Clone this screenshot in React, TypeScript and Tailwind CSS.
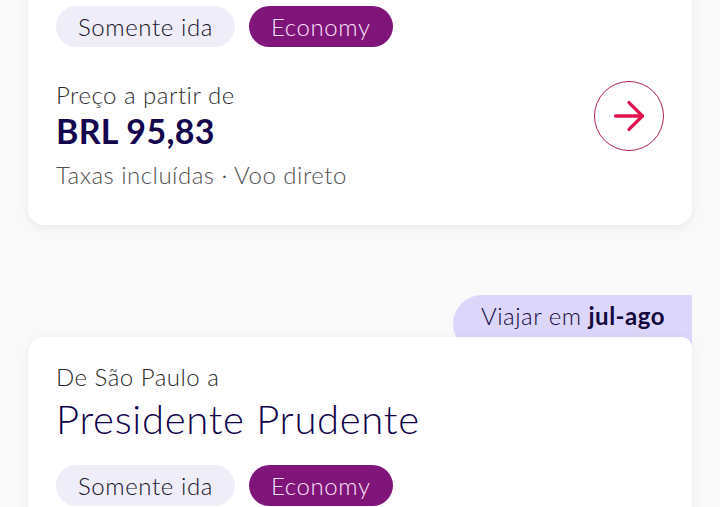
import { ArrowRight } from "lucide-react";

const font = { fontFamily: "Lato, 'Noto Sans', sans-serif" };

function Pills() {
  return (
    <div className="flex gap-[14px]">
      <span className="h-[41px] px-[22px] flex items-center rounded-full bg-[#efedf8] text-[#14122b] text-[24px] tracking-[0.6px]">
        Somente ida
      </span>
      <span className="h-[41px] px-[22px] flex items-center rounded-full bg-[#7f1479] text-[#fbe3f8] text-[24px] tracking-[0.6px]">
        Economy
      </span>
    </div>
  );
}

export default function App() {
  return (
    <div className="w-[720px] h-[507px] overflow-hidden bg-[#f9f9f9] font-light" style={font}>
      <div className="px-[28px] -mt-[20px]">
        {/* card 1 */}
        <div className="bg-white rounded-[16px] shadow-[0_2px_10px_rgba(0,0,0,0.07)] px-[28px] pt-[26px] pb-[34px]">
          <Pills />
          <div className="mt-[32px] flex items-start justify-between">
            <div>
              <div className="text-[24px] leading-[32px] text-[#2f2f2f] tracking-[0.5px]">Preço a partir de</div>
              <div className="text-[34px] leading-[40px] font-bold text-[#12054e] tracking-[0.3px]">BRL 95,83</div>
              <div className="mt-[8px] text-[24px] leading-[32px] text-[#4f4f4f] tracking-[0.5px]">Taxas incluídas · Voo direto</div>
            </div>
            <div className="mt-[2px] w-[70px] h-[70px] rounded-full border border-[#b3204e] flex items-center justify-center">
              <ArrowRight size={46} strokeWidth={1.7} className="text-[#e0134e]" />
            </div>
          </div>
        </div>

        {/* card 2 */}
        <div className="mt-[70px] flex flex-col items-end">
          <div className="h-[58px] pl-[28px] pr-[27px] rounded-l-full rounded-tr-[18px] bg-[#ddd6fb] text-[#140a40] text-[24px] tracking-[0.5px] flex items-start">
            <span className="leading-[42px]">
              Viajar em <span className="font-bold">jul-ago</span>
            </span>
          </div>
          <div className="-mt-[16px] w-full bg-white rounded-t-[16px] rounded-tr-[10px] shadow-[0_2px_10px_rgba(0,0,0,0.07)] px-[28px] pt-[24px] pb-[20px]">
            <div className="text-[24px] leading-[32px] text-[#2a2a2a] tracking-[0.5px]">De São Paulo a</div>
            <div className="text-[40px] leading-[52px] text-[#10034a] tracking-[0.7px]">Presidente Prudente</div>
            <div className="mt-[20px]">
              <Pills />
            </div>
          </div>
        </div>
      </div>
    </div>
  );
}
